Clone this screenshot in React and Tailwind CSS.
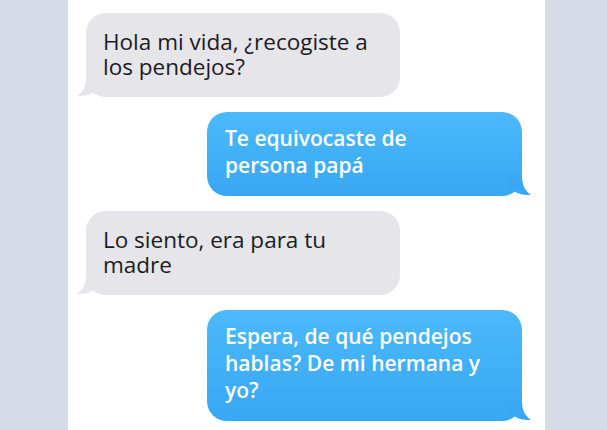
import React from 'react'

const messages = [
  { from: 'them', lines: ['Hola mi vida, ¿recogiste a', 'los pendejos?'] },
  { from: 'me', lines: ['Te equivocaste de', 'persona papá'] },
  { from: 'them', lines: ['Lo siento, era para tu', 'madre'] },
  { from: 'me', lines: ['Espera, de qué pendejos', 'hablas? De mi hermana y', 'yo?'] },
]

function Tail({ side }) {
  if (side === 'them') {
    return (
      <svg className="absolute -left-[9px] bottom-0" width="24" height="20" viewBox="0 0 24 20">
        <path d="M9 0 C9 9 6 15 0 19 C7 19.5 13 18 17 15 L24 15 L24 0 Z" fill="#e5e5ea" />
      </svg>
    )
  }
  return (
    <svg className="absolute -right-[9px] bottom-0" width="24" height="20" viewBox="0 0 24 20">
      <path d="M15 0 C15 9 18 15 24 19 C17 19.5 11 18 7 15 L0 15 L0 0 Z" fill="#38a7f4" />
    </svg>
  )
}

function Bubble({ msg }) {
  const mine = msg.from === 'me'
  return (
    <div className={mine ? 'flex justify-end pr-[23px]' : 'flex justify-start pl-[18px]'}>
      <div
        className={
          mine
            ? 'relative w-[315px] rounded-[20px] bg-gradient-to-b from-[#4cb9fb] to-[#38a7f4] pl-[18px] pr-3 pt-[13px] pb-[17px] text-white font-semibold'
            : 'relative w-[314px] rounded-[20px] bg-[#e5e5ea] pl-[17px] pr-3 pt-[16px] pb-[18px] text-[#1c1c1e]'
        }
      >
        <Tail side={msg.from} />
        <div className={mine ? 'relative text-[21px] leading-[27px]' : 'relative text-[22.5px] leading-[25px]'}>
          {msg.lines.map((l) => (
            <div key={l} className="whitespace-nowrap">{l}</div>
          ))}
        </div>
      </div>
    </div>
  )
}

export default function App() {
  return (
    <div className="flex h-[430px] w-[607px] overflow-hidden font-['Open_Sans',sans-serif]">
      <div className="w-[68px] shrink-0 bg-[#d5dce8]" />
      <div className="flex flex-1 flex-col gap-[15px] bg-white pt-[13px]">
        {messages.map((m, i) => (
          <Bubble key={i} msg={m} />
        ))}
      </div>
      <div className="w-[62px] shrink-0 bg-[#d5dce8]" />
    </div>
  )
}
